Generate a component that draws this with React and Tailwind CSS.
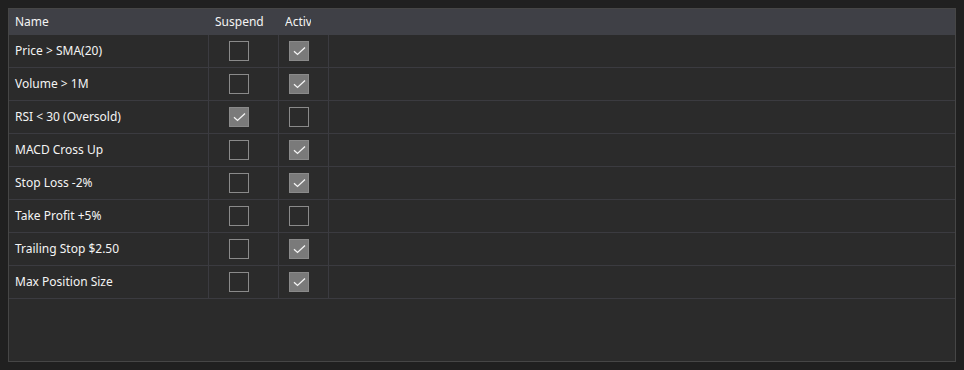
import { useState } from "react";

const rules = [
  { name: "Price > SMA(20)", suspend: false, active: true },
  { name: "Volume > 1M", suspend: false, active: true },
  { name: "RSI < 30 (Oversold)", suspend: true, active: false },
  { name: "MACD Cross Up", suspend: false, active: true },
  { name: "Stop Loss -2%", suspend: false, active: true },
  { name: "Take Profit +5%", suspend: false, active: false },
  { name: "Trailing Stop $2.50", suspend: false, active: true },
  { name: "Max Position Size", suspend: false, active: true },
];

function Check({ checked, onChange }) {
  return (
    <button
      onClick={onChange}
      className={`w-5 h-5 border border-[#8a8a8a] flex items-center justify-center ${
        checked ? "bg-[#7a7a7a]" : "bg-transparent"
      }`}
    >
      {checked && (
        <svg width="13" height="10" viewBox="0 0 13 10" fill="none">
          <path d="M1 5.2 L4.5 8.4 L12 1.4" stroke="#f4f4f4" strokeWidth="1.3" />
        </svg>
      )}
    </button>
  );
}

export default function App() {
  const [rows, setRows] = useState(rules);

  const toggle = (i, key) => {
    setRows((r) => r.map((row, j) => (j === i ? { ...row, [key]: !row[key] } : row)));
  };

  return (
    <div className="w-[964px] h-[370px] bg-[#202020] p-2 font-['Noto_Sans',sans-serif] text-[12px] text-[#f4f4f4]">
      <div className="h-[354px] bg-[#2b2b2b] border border-[#464646] flex flex-col">
        {/* header */}
        <div className="h-[26px] bg-[#3f4046] flex items-center shrink-0">
          <div className="w-[200px] pl-[6px]">Name</div>
          <div className="w-[70px] pl-[6px]">Suspend</div>
          <div className="w-[26px] ml-[6px] overflow-hidden whitespace-nowrap">Active</div>
        </div>
        {rows.map((row, i) => (
          <div key={row.name} className="h-[33px] flex border-b border-[#3b3b40]">
            <div className="w-[200px] pl-[6px] flex items-center border-r border-[#3b3b40]">{row.name}</div>
            <div className="w-[70px] pl-[20px] flex items-center border-r border-[#3b3b40]">
              <Check checked={row.suspend} onChange={() => toggle(i, "suspend")} />
            </div>
            <div className="w-[50px] pl-[10px] flex items-center border-r border-[#3b3b40]">
              <Check checked={row.active} onChange={() => toggle(i, "active")} />
            </div>
          </div>
        ))}
      </div>
    </div>
  );
}
